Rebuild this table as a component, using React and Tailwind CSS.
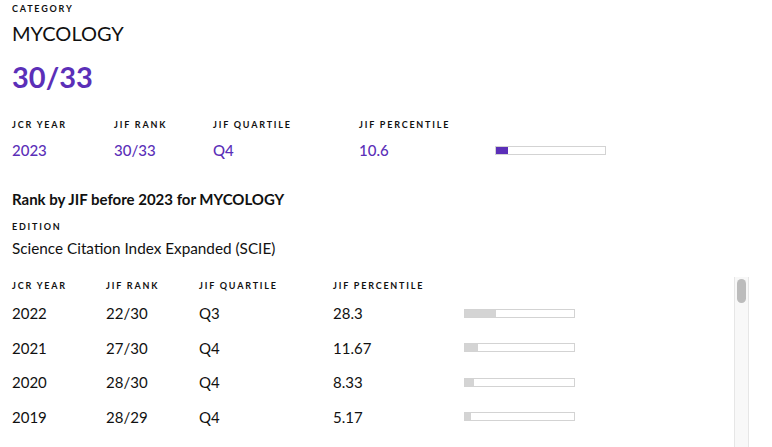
const history = [
  { year: "2022", rank: "22/30", quartile: "Q3", percentile: "28.3" },
  { year: "2021", rank: "27/30", quartile: "Q4", percentile: "11.67" },
  { year: "2020", rank: "28/30", quartile: "Q4", percentile: "8.33" },
  { year: "2019", rank: "28/29", quartile: "Q4", percentile: "5.17" },
];

function Label({ children, className = "" }) {
  return (
    <div className={`text-[9px] font-bold tracking-[0.2em] leading-[12px] text-[#111] uppercase ${className}`}>
      {children}
    </div>
  );
}

function Bar({ value, fill }) {
  return (
    <div className="h-[9px] w-[111px] border border-[#d3d3d3] bg-white">
      <div className={`h-full ${fill}`} style={{ width: `${value}%` }} />
    </div>
  );
}

export default function App() {
  return (
    <div className="h-[447px] w-[772px] overflow-hidden bg-white flex flex-col font-['Lato',sans-serif] text-[#111]">
      <div className="pl-3 pt-[3px]">
        <Label className="leading-[11px]">Category</Label>
        <div className="mt-[4px] text-[20px] leading-[28px]">MYCOLOGY</div>
        <div className="mt-[12px] text-[29px] leading-[36px] font-bold text-[#5b2fb8]">30/33</div>

        <div className="mt-[24px] flex">
          <Label className="w-[102px]">JCR Year</Label>
          <Label className="w-[99px]">JIF Rank</Label>
          <Label className="w-[146px]">JIF Quartile</Label>
          <Label className="w-[136px]">JIF Percentile</Label>
        </div>
        <div className="mt-[9px] flex items-center text-[15px] leading-[20px] font-medium text-[#5b2fb8]">
          <div className="w-[102px]">2023</div>
          <div className="w-[99px]">30/33</div>
          <div className="w-[146px]">Q4</div>
          <div className="w-[136px]">10.6</div>
          <Bar value={10.6} fill="bg-[#5b2fb8]" />
        </div>

        <div className="mt-[29px] text-[15px] leading-[20px] font-bold">Rank by JIF before 2023 for MYCOLOGY</div>
        <Label className="mt-[12px]">Edition</Label>
        <div className="mt-[4px] text-[15.3px] leading-[22px]">Science Citation Index Expanded (SCIE)</div>
      </div>

      <div className="mt-[18px] flex-1 flex min-h-0 w-[749px]">
        <div className="flex-1 overflow-hidden pl-3">
          <div className="mt-[3px] flex">
            <Label className="w-[94px]">JCR Year</Label>
            <Label className="w-[93px]">JIF Rank</Label>
            <Label className="w-[134px]">JIF Quartile</Label>
            <Label className="w-[131px]">JIF Percentile</Label>
          </div>
          <div className="mt-[4px]">
            {history.map((r) => (
              <div key={r.year} className="flex items-center h-[34.5px] text-[15px]">
                <div className="w-[94px]">{r.year}</div>
                <div className="w-[93px]">{r.rank}</div>
                <div className="w-[134px]">{r.quartile}</div>
                <div className="w-[131px]">{r.percentile}</div>
                <Bar value={parseFloat(r.percentile)} fill="bg-[#d4d4d4]" />
              </div>
            ))}
          </div>
        </div>
        <div className="w-[15px] bg-[#f8f8f8] border-x border-[#e6e6e6] pt-[2px] flex justify-center">
          <div className="w-[9px] h-[24px] rounded-full bg-[#bcbcbc]" />
        </div>
      </div>
    </div>
  );
}
